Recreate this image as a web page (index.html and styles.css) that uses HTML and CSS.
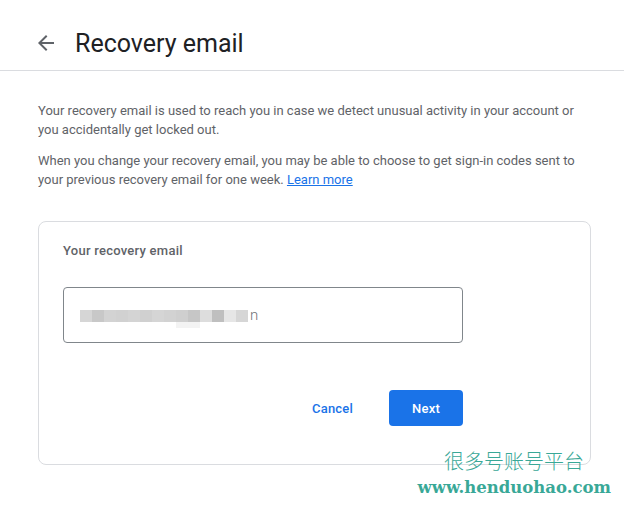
FILE: index.html
```html
<!DOCTYPE html>
<html lang="en">
<head>
<meta charset="utf-8">
<title>Recovery email</title>
<link rel="stylesheet" href="styles.css">
</head>
<body>
<header class="topbar">
  <svg class="back" viewBox="0 0 24 24" width="24" height="24" aria-hidden="true"><path d="M20 11H7.83l5.59-5.59L12 4l-8 8 8 8 1.41-1.41L7.83 13H20v-2z"/></svg>
  <h1 class="title">Recovery email</h1>
</header>
<main class="content">
  <p class="desc">Your recovery email is used to reach you in case we detect unusual activity in your account or you accidentally get locked out.</p>
  <p class="desc second">When you change your recovery email, you may be able to choose to get sign-in codes sent to your previous recovery email for one week. <a class="link" href="#">Learn more</a></p>
  <section class="card">
    <div class="label">Your recovery email</div>
    <div class="field">
      <span class="blur">
        <i class="px c1"></i><i class="px c2"></i><i class="px c3"></i><i class="px c4"></i><i class="px c5"></i><i class="px c6"></i><i class="px c7"></i><i class="px c8"></i><i class="px c9"></i><i class="px c10"></i><i class="px c11"></i><i class="px c12"></i><i class="px c13"></i><i class="px c14"></i>
        <i class="ghost"></i>
      </span><span class="tail">n</span>
    </div>
    <div class="actions">
      <button class="btn text">Cancel</button>
      <button class="btn filled">Next</button>
    </div>
  </section>
</main>
<div class="watermark">
  <div class="wm-cn">很多号账号平台</div>
  <div class="wm-url">www.henduohao.com</div>
</div>
</body>
</html>
```
FILE: styles.css
```css
* { box-sizing: border-box; }
html, body { margin: 0; padding: 0; background: #fff; }
body {
  font-family: Roboto, "Noto Sans", Arial, sans-serif;
  color: #202124;
  width: 624px;
  height: 507px;
  position: relative;
  overflow: hidden;
}
.topbar {
  height: 71px;
  display: flex;
  align-items: center;
  padding: 16px 0 0 34px;
  border-bottom: 1px solid #dadce0;
}
.back { fill: #5f6368; flex: none; }
.title {
  margin: 0 0 0 17px;
  font-size: 25px;
  font-weight: 400;
  color: #202124;
  letter-spacing: 0;
}
.content {
  padding: 31px 33px 0 38px;
}
.desc {
  margin: 0;
  font-size: 13px;
  line-height: 18.5px;
  color: #5f6368;
}
.desc.second { margin-top: 13px; }
.link { color: #1a73e8; text-decoration: underline; }
.card {
  margin-top: 32px;
  border: 1px solid #dadce0;
  border-radius: 8px;
  padding: 21px 24px 37px;
  height: 244px;
}
.label {
  font-size: 13px;
  font-weight: 500;
  line-height: 16px;
  color: #5f6368;
  letter-spacing: 0.25px;
}
.field {
  margin-top: 28px;
  width: 400px;
  height: 56px;
  border: 1px solid #80868b;
  border-radius: 4px;
  display: flex;
  align-items: center;
  padding-left: 16px;
  font-size: 15px;
  color: #202124;
}
.blur {
  position: relative;
  display: flex;
  height: 12px;
  margin-top: 2px;
}
.px { display: block; width: 12px; height: 12px; }
.c1 { background: #d6d6d6; }
.c2 { background: #c8c8c8; }
.c3 { background: #d3d3d3; }
.c4 { background: #d1d1d1; }
.c5 { background: #d4d4d4; }
.c6 { background: #d0d0d0; }
.c7 { background: #d5d5d5; }
.c8 { background: #d2d2d2; }
.c9 { background: #cfcfcf; }
.c10 { background: #c6c6c6; }
.c11 { background: #dddddd; }
.c12 { background: #bfbfbf; }
.c13 { background: #e6e6e6; }
.c14 { background: #d6d6d6; }
.ghost {
  position: absolute;
  left: 96px;
  top: 12px;
  width: 24px;
  height: 6px;
  background: #f3f3f3;
}
.tail { margin-left: 2px; color: #6f7377; font-weight: 300; }
.actions {
  margin-top: 47px;
  width: 400px;
  display: flex;
  justify-content: flex-end;
  gap: 24px;
}
.btn {
  font-family: Roboto, Arial, sans-serif;
  font-size: 13px;
  font-weight: 500;
  height: 36px;
  border-radius: 4px;
  border: none;
  cursor: pointer;
  letter-spacing: 0.2px;
}
.btn.text {
  background: transparent;
  color: #1a73e8;
  padding: 0 12px;
}
.btn.filled {
  background: #1a73e8;
  color: #fff;
  width: 74px;
  padding: 0;
}
.watermark {
  position: absolute;
  right: 13px;
  top: 448px;
  display: flex;
  flex-direction: column;
  align-items: flex-end;
  color: #39a897;
}
.wm-cn {
  font-family: "Noto Sans CJK SC", sans-serif;
  font-weight: 300;
  font-size: 20px;
  line-height: 26px;
  margin-right: 27px;
  letter-spacing: 0;
}
.wm-url {
  font-family: "DejaVu Serif", serif;
  font-weight: 700;
  font-size: 16.5px;
  line-height: 27px;
}
```
